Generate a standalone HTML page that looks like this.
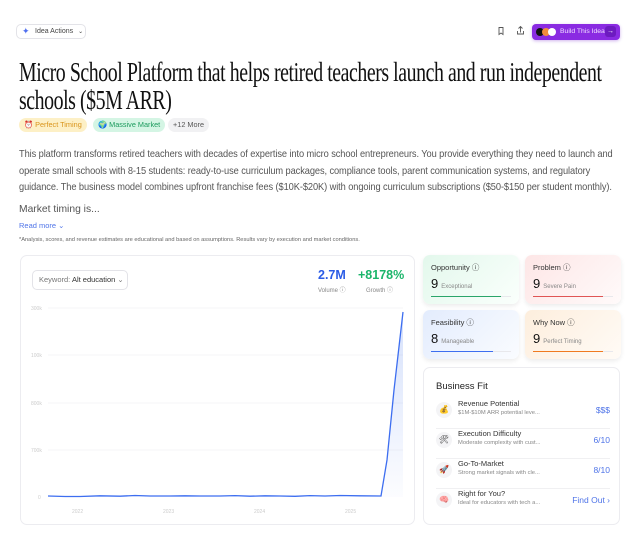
<!DOCTYPE html>
<html><head><meta charset="utf-8"><style>
*{box-sizing:border-box;margin:0;padding:0}
body{width:640px;height:545px;background:#fff;font-family:"Liberation Sans",sans-serif;color:#222;position:relative;overflow:hidden}
.abs{position:absolute;white-space:nowrap}
.btn{border:1px solid #e3e3e8;border-radius:5px;background:#fff}
.title{left:19px;top:58px;font-family:"Liberation Serif",serif;font-size:27px;line-height:28px;letter-spacing:-0.6px;color:#111;transform:scaleX(0.735);transform-origin:left top}
.tag{top:118px;height:14px;border-radius:7px;font-size:7.3px;line-height:14px;padding:0 5px}
.para{left:19px;top:147px;font-size:10.3px;line-height:16.5px;color:#555;letter-spacing:-0.1px;transform:scaleX(0.9);transform-origin:left top}
.card{border:1px solid #ececf0;border-radius:7px;background:#fff}
.sc{width:96px;height:49px;border-radius:7px;box-shadow:0 2px 5px rgba(0,0,0,.08);padding:7px 8px}
.sc .t{font-size:7.5px;color:#333}
.sc .n{font-size:13px;color:#111;margin-top:3px}
.sc .n span{font-size:6px;color:#888;margin-left:3px}
.bar{position:absolute;left:8px;right:8px;bottom:7px;height:1.5px;background:#e8e8ec}
.bar i{position:absolute;left:0;top:0;height:1.5px;display:block}
.row{position:absolute;left:12px;width:174px;height:30px}
.ic{position:absolute;left:0;top:3px;width:16px;height:16px;border-radius:50%;background:#f4f4f6;font-size:8px;text-align:center;line-height:16px}
.rt{position:absolute;left:22px;top:0;font-size:7.5px;color:#333}
.rs{position:absolute;left:22px;top:11px;font-size:5.8px;color:#888}
.rv{position:absolute;right:0;top:6px;font-size:8.5px;color:#4f74e8}
</style></head><body>
<div class="abs btn" style="left:16px;top:24px;width:70px;height:15px;font-size:7px;line-height:13px;padding-left:18px;color:#444">Idea Actions <span style="font-size:6px;margin-left:3px">⌄</span></div>
<div class="abs" style="left:22px;top:26px;color:#4f6ff0;font-size:9px">✦</div>
<svg class="abs" style="left:496px;top:26px" width="10" height="10" viewBox="0 0 10 10"><path d="M3 1.5h4v7L5 7 3 8.5z" fill="none" stroke="#555" stroke-width="0.9"/></svg>
<svg class="abs" style="left:515px;top:25px" width="11" height="11" viewBox="0 0 11 11"><path d="M5.5 1.5v6M3.5 3.5l2-2 2 2M2.5 6v3h6V6" fill="none" stroke="#555" stroke-width="0.9"/></svg>
<div class="abs" style="left:532px;top:24px;width:88px;height:16px;background:#8a2be2;border-radius:4px;box-shadow:0 1px 3px rgba(100,0,200,.3)"></div>
<div class="abs" style="left:536px;top:28px;width:8px;height:8px;border-radius:50%;background:#111"></div>
<div class="abs" style="left:542px;top:28px;width:8px;height:8px;border-radius:50%;background:#f28b3c"></div>
<div class="abs" style="left:548px;top:28px;width:8px;height:8px;border-radius:50%;background:#fff"></div>
<div class="abs" style="left:560px;top:28px;font-size:6.8px;color:#f0e0ff">Build This Idea</div>
<div class="abs" style="left:605px;top:26px;width:11px;height:11px;border-radius:3px;background:#6d1bc0;color:#fff;font-size:7px;text-align:center;line-height:11px">→</div>
<div class="abs title">Micro School Platform that helps retired teachers launch and run independent<br>schools ($5M ARR)</div>
<div class="abs tag" style="left:19px;background:#fdf0c6;color:#d9941a">⏰ Perfect Timing</div>
<div class="abs tag" style="left:93px;background:#d4f5e4;color:#1a9a5c">🌍 Massive Market</div>
<div class="abs tag" style="left:168px;background:#f1f1f3;color:#555">+12 More</div>
<div class="abs para">This platform transforms retired teachers with decades of expertise into micro school entrepreneurs. You provide everything they need to launch and<br>operate small schools with 8-15 students: ready-to-use curriculum packages, compliance tools, parent communication systems, and regulatory<br>guidance. The business model combines upfront franchise fees ($10K-$20K) with ongoing curriculum subscriptions ($50-$150 per student monthly).</div>
<div class="abs" style="left:19px;top:204px;font-size:10.3px;color:#555">Market timing is...</div>
<div class="abs" style="left:19px;top:221px;font-size:7.5px;color:#4f74e8">Read more ⌄</div>
<div class="abs" style="left:19px;top:237px;font-size:5.7px;color:#666">*Analysis, scores, and revenue estimates are educational and based on assumptions. Results vary by execution and market conditions.</div>

<div class="abs card" style="left:20px;top:255px;width:395px;height:270px"></div>
<div class="abs btn" style="left:32px;top:270px;width:96px;height:20px;font-size:7.5px;line-height:18px;padding-left:6px;color:#777">Keyword: <b style="color:#333;font-weight:normal">Alt education</b> ⌄</div>
<div class="abs" style="left:318px;top:268px;font-size:12.5px;font-weight:bold;color:#2b5ce6">2.7M</div>
<div class="abs" style="left:358px;top:268px;font-size:12.5px;font-weight:bold;color:#1bb56a">+8178%</div>
<div class="abs" style="left:318px;top:285px;font-size:6px;color:#888">Volume ⓘ</div>
<div class="abs" style="left:366px;top:285px;font-size:6px;color:#888">Growth ⓘ</div>
<svg class="abs" style="left:20px;top:300px" width="395" height="220">
<defs><linearGradient id="g" x1="0" y1="0" x2="0" y2="1"><stop offset="0" stop-color="#5b86f0" stop-opacity=".25"/><stop offset="1" stop-color="#5b86f0" stop-opacity=".02"/></linearGradient></defs>
<g stroke="#f2f2f4" stroke-width="0.7"><line x1="28" y1="8" x2="383" y2="8"/><line x1="28" y1="55" x2="383" y2="55"/><line x1="28" y1="103" x2="383" y2="103"/><line x1="28" y1="150" x2="383" y2="150"/></g>
<g font-family="Liberation Sans" font-size="5" fill="#ccc"><text x="11" y="10">300k</text><text x="11" y="57">100k</text><text x="11" y="105">800k</text><text x="11" y="152">700k</text><text x="18" y="199">0</text><text x="52" y="213">2022</text><text x="143" y="213">2023</text><text x="234" y="213">2024</text><text x="325" y="213">2025</text></g>
<path d="M28 196 L60 196.5 L100 195.8 L140 196 L180 195.8 L220 196.2 L260 195.8 L300 196 L340 195.6 L361 196 L367 160 L374 90 L383 12 L383 197 L28 197Z" fill="url(#g)"/>
<path d="M28 196 L45 196.5 L60 196.5 L80 195.8 L100 196.2 L115 195.5 L130 196 L150 196 L165 195.8 L180 196 L200 196 L215 195.6 L230 196.2 L245 195.8 L260 196 L275 196.3 L290 195.6 L305 196 L320 195.5 L340 195.8 L361 196 L367 160 L374 90 L383 12" fill="none" stroke="#3d6ef0" stroke-width="1.3"/>
</svg>

<div class="abs sc" style="left:423px;top:255px;background:linear-gradient(135deg,#e3f8ec,#fafffc)"><div class="t">Opportunity ⓘ</div><div class="n">9<span>Exceptional</span></div><div class="bar"><i style="width:88%;background:#2aa56a"></i></div></div>
<div class="abs sc" style="left:525px;top:255px;background:linear-gradient(135deg,#fde6e6,#fffafa)"><div class="t">Problem ⓘ</div><div class="n">9<span>Severe Pain</span></div><div class="bar"><i style="width:88%;background:#e05555"></i></div></div>
<div class="abs sc" style="left:423px;top:310px;background:linear-gradient(135deg,#e3ecfd,#fafcff)"><div class="t">Feasibility ⓘ</div><div class="n">8<span>Manageable</span></div><div class="bar"><i style="width:78%;background:#3d6ef0"></i></div></div>
<div class="abs sc" style="left:525px;top:310px;background:linear-gradient(135deg,#fdeedd,#fffbf6)"><div class="t">Why Now ⓘ</div><div class="n">9<span>Perfect Timing</span></div><div class="bar"><i style="width:88%;background:#f07a20"></i></div></div>

<div class="abs card" style="left:423px;top:367px;width:197px;height:158px">
<div class="abs" style="left:12px;top:13px;font-size:9.5px;color:#222">Business Fit</div>
<div class="row" style="top:31px;border-bottom:1px solid #f0f0f2"><div class="ic">💰</div><div class="rt">Revenue Potential</div><div class="rs">$1M-$10M ARR potential leve...</div><div class="rv">$$$</div></div>
<div class="row" style="top:61px;border-bottom:1px solid #f0f0f2"><div class="ic">🛠</div><div class="rt">Execution Difficulty</div><div class="rs">Moderate complexity with cust...</div><div class="rv">6/10</div></div>
<div class="row" style="top:91px;border-bottom:1px solid #f0f0f2"><div class="ic">🚀</div><div class="rt">Go-To-Market</div><div class="rs">Strong market signals with cle...</div><div class="rv">8/10</div></div>
<div class="row" style="top:121px"><div class="ic">🧠</div><div class="rt">Right for You?</div><div class="rs">Ideal for educators with tech a...</div><div class="rv">Find Out ›</div></div>
</div>
</body></html>
